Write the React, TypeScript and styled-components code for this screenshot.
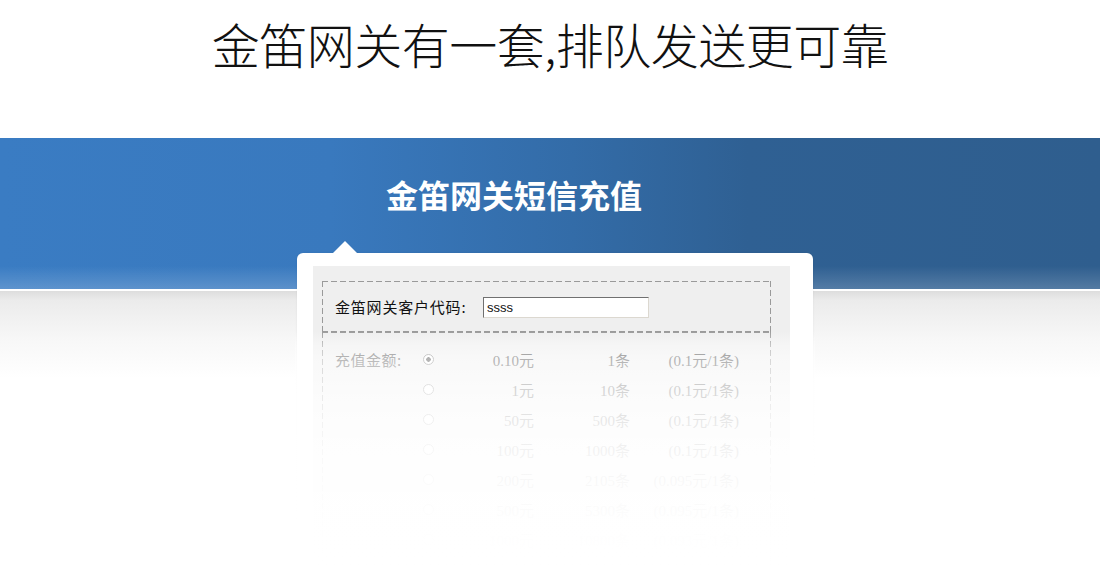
import React from "react";
import styled, { createGlobalStyle } from "styled-components";

const GlobalStyle = createGlobalStyle`
    html, body {
        margin: 0;
        padding: 0;
        background: #fff;
    }
    body {
        font-family: "Noto Sans CJK SC", "Liberation Sans", sans-serif;
        color: #333;
    }
`;

const Page = styled.div`
    width: 1100px;
    height: 570px;
    overflow: hidden;
`;

const Headline = styled.h1`
    box-sizing: border-box;
    height: 138px;
    margin: 0;
    padding-top: 13px;
    font-size: 48px;
    line-height: 60px;
    font-weight: 200;
    color: #111;
    text-align: center;
    letter-spacing: -0.5px;
`;

const Stage = styled.section`
    height: 432px;
    background-color: #fff;
    background-image:
        linear-gradient(to bottom,
            rgba(255, 255, 255, 0) 0,
            rgba(255, 255, 255, 0) 128px,
            rgba(255, 255, 255, 0.18) 151px,
            #fff 151px,
            #fff 153px,
            #dddddd 153px,
            #ebebeb 162px,
            #f7f7f7 200px,
            #fff 240px),
        linear-gradient(to right,
            #3a7cc3 0%,
            #3979be 30%,
            #336ca8 52%,
            #2f6093 68%,
            #2f5e8e 100%);
    background-size: 100% 100%, 100% 151px;
    background-repeat: no-repeat;
`;

const Column = styled.div`
    width: 516px;
    margin-left: calc(50% - 253px);
    padding-top: 38px;
`;

const BandTitle = styled.h2`
    margin: 0;
    padding-left: 89px;
    font-size: 32px;
    line-height: 36px;
    font-weight: 700;
    color: #fff;
`;

const Card = styled.div`
    position: relative;
    margin-top: 41px;
    padding: 13px 23px 0 16px;
    height: 320px;
    background: #fff;
    border-radius: 6px 6px 0 0;
    box-shadow: 0 0 2px rgba(0, 0, 0, 0.08);

    &::before {
        content: "";
        position: absolute;
        left: 36px;
        top: -12px;
        border-left: 12px solid transparent;
        border-right: 12px solid transparent;
        border-bottom: 12px solid #fff;
    }

    &::after {
        content: "";
        position: absolute;
        left: -2px;
        right: -2px;
        top: 78px;
        bottom: 0;
        background: linear-gradient(to bottom,
            rgba(255, 255, 255, 0) 0,
            rgba(255, 255, 255, 0.42) 14px,
            rgba(255, 255, 255, 0.6) 29px,
            rgba(255, 255, 255, 0.77) 59px,
            rgba(255, 255, 255, 0.87) 89px,
            rgba(255, 255, 255, 0.93) 119px,
            rgba(255, 255, 255, 0.96) 149px,
            rgba(255, 255, 255, 0.98) 179px,
            rgba(255, 255, 255, 0.995) 209px,
            #fff 239px);
        pointer-events: none;
    }
`;

const Panel = styled.div`
    padding: 15px 19px 0 9px;
    height: 100%;
    box-sizing: border-box;
    background: #efefef;
`;

const DashedBox = styled.div`
    box-sizing: border-box;
    padding-left: 13px;
    background-image:
        repeating-linear-gradient(to right, #9a9a9a 0 6px, transparent 6px 9px),
        repeating-linear-gradient(to right, #9a9a9a 0 6px, transparent 6px 9px),
        repeating-linear-gradient(to bottom, #9a9a9a 0 6px, transparent 6px 9px),
        repeating-linear-gradient(to bottom, #9a9a9a 0 6px, transparent 6px 9px);
    background-size: 100% 1px, 100% 1px, 1px 100%, 1px 100%;
    background-position: 0 0, 0 100%, 0 0, 100% 0;
    background-repeat: no-repeat;
`;

const CodeRow = styled(DashedBox)`
    display: flex;
    align-items: center;
    height: 51px;
`;

const Label = styled.span`
    width: 148px;
    font-size: 15px;
    line-height: 20px;
    letter-spacing: 0.8px;
    color: #111;
`;

const CodeInput = styled.input`
    box-sizing: border-box;
    width: 166px;
    height: 21px;
    padding: 0 3px;
    margin-top: 2px;
    border: 1px solid #dcd8d0;
    border-top-color: #707070;
    border-left-color: #707070;
    background: #fff;
    font-family: "Liberation Sans", Arial, sans-serif;
    font-size: 13px;
    color: #111;
    outline: none;
`;

const AmountBox = styled(DashedBox)`
    padding-top: 12px;
    height: 300px;
`;

const AmountRow = styled.div`
    display: grid;
    grid-template-columns: 88px 11px 100px 96px 109px;
    align-items: center;
    height: 30px;
    font-family: "Liberation Serif", "Noto Sans CJK SC", serif;
    font-size: 15px;
    color: #444;
`;

const FieldName = styled.span`
    font-family: "Noto Sans CJK SC", sans-serif;
    font-size: 15px;
    letter-spacing: 0.5px;
    color: #555;
`;

const Radio = styled.span<{ $checked?: boolean }>`
    box-sizing: border-box;
    width: 11px;
    height: 11px;
    border-radius: 50%;
    border: 1px solid #888;
    background: ${({ $checked }) =>
        $checked ? "radial-gradient(circle, #444 0 2px, #fff 2.5px)" : "#fff"};
`;

const Cell = styled.span`
    text-align: right;
    white-space: nowrap;
`;

const plans = [
    { price: "0.10元", count: "1条", unit: "(0.1元/1条)" },
    { price: "1元", count: "10条", unit: "(0.1元/1条)" },
    { price: "50元", count: "500条", unit: "(0.1元/1条)" },
    { price: "100元", count: "1000条", unit: "(0.1元/1条)" },
    { price: "200元", count: "2105条", unit: "(0.095元/1条)" },
    { price: "500元", count: "5300条", unit: "(0.095元/1条)" },
    { price: "1000元", count: "10800条", unit: "(0.093元/1条)" },
];

export default function App(): JSX.Element {
    return (
        <Page>
            <GlobalStyle />
            <Headline>金笛网关有一套,排队发送更可靠</Headline>
            <Stage>
                <Column>
                    <BandTitle>金笛网关短信充值</BandTitle>
                    <Card>
                        <Panel>
                            <CodeRow>
                                <Label>金笛网关客户代码:</Label>
                                <CodeInput defaultValue="ssss" />
                            </CodeRow>
                            <AmountBox>
                                {plans.map((plan, i) => (
                                    <AmountRow key={plan.price}>
                                        <FieldName>{i === 0 ? "充值金额:" : ""}</FieldName>
                                        <Radio $checked={i === 0} />
                                        <Cell>{plan.price}</Cell>
                                        <Cell>{plan.count}</Cell>
                                        <Cell>{plan.unit}</Cell>
                                    </AmountRow>
                                ))}
                            </AmountBox>
                        </Panel>
                    </Card>
                </Column>
            </Stage>
        </Page>
    );
}
